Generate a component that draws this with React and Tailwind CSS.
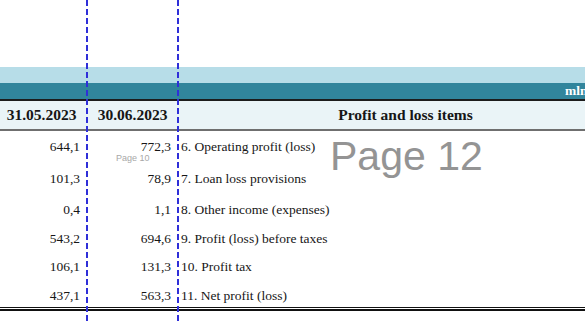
const rows = [
  { a: "644,1", b: "772,3", label: "6. Operating profit (loss)", h: "h-[33px]" },
  { a: "101,3", b: "78,9", label: "7. Loan loss provisions", h: "h-[31px]" },
  { a: "0,4", b: "1,1", label: "8. Other income (expenses)", h: "h-[30px]" },
  { a: "543,2", b: "694,6", label: "9. Profit (loss) before taxes", h: "h-[28px]" },
  { a: "106,1", b: "131,3", label: "10. Profit tax", h: "h-[28px]" },
  { a: "437,1", b: "563,3", label: "11. Net profit (loss)", h: "h-[26px] pt-[4px]" },
]

const dashed =
  "absolute top-0 bottom-0 w-[2px] bg-[repeating-linear-gradient(to_bottom,#2f2fd8_0_6px,transparent_6px_9px)]"

export default function App() {
  return (
    <div className="relative w-[585px] h-[323px] overflow-hidden bg-white text-[#161616] font-['Liberation_Serif',serif]">
      <div className="pt-[67px] -ml-1 w-[637px]">
        <div className="h-4 bg-[#b7dde8]" />
        <div className="h-4 bg-[#31859c] flex items-center pl-[569px]">
          <span className="text-white font-bold text-[13.5px] leading-none">mln</span>
        </div>
        <div className="h-[2px] bg-[#1c1c1c]" />

        <div className="flex h-7 bg-[#eaf4f7] items-center font-bold text-[15.5px]">
          <div className="w-[91px] text-center">31.05.2023</div>
          <div className="w-[91px] text-center">30.06.2023</div>
          <div className="flex-1 text-center">Profit and loss items</div>
        </div>
        <div className="h-[2px] bg-[#6f6f6f]" />

        {rows.map((r) => (
          <div key={r.label} className={`flex items-center text-[13.5px] ${r.h}`}>
            <div className="w-[91px] text-right pr-[7px]">{r.a}</div>
            <div className="w-[91px] text-right pr-[7px]">{r.b}</div>
            <div className="flex-1 pl-[3px]">{r.label}</div>
          </div>
        ))}

        <div className="h-px bg-[#111]" />
        <div className="h-px" />
        <div className="h-[2px] bg-[#111]" />
      </div>

      <span className="absolute left-[116px] top-[154px] text-[9px] leading-none text-[#a8a8a8] font-['Liberation_Sans',sans-serif]">
        Page 10
      </span>
      <span className="absolute left-[330px] top-[136px] text-[41px] leading-none text-[#949494] font-['Liberation_Sans',sans-serif]">
        Page 12
      </span>

      <div className={`${dashed} left-[86px]`} />
      <div className={`${dashed} left-[177px]`} />
    </div>
  )
}
